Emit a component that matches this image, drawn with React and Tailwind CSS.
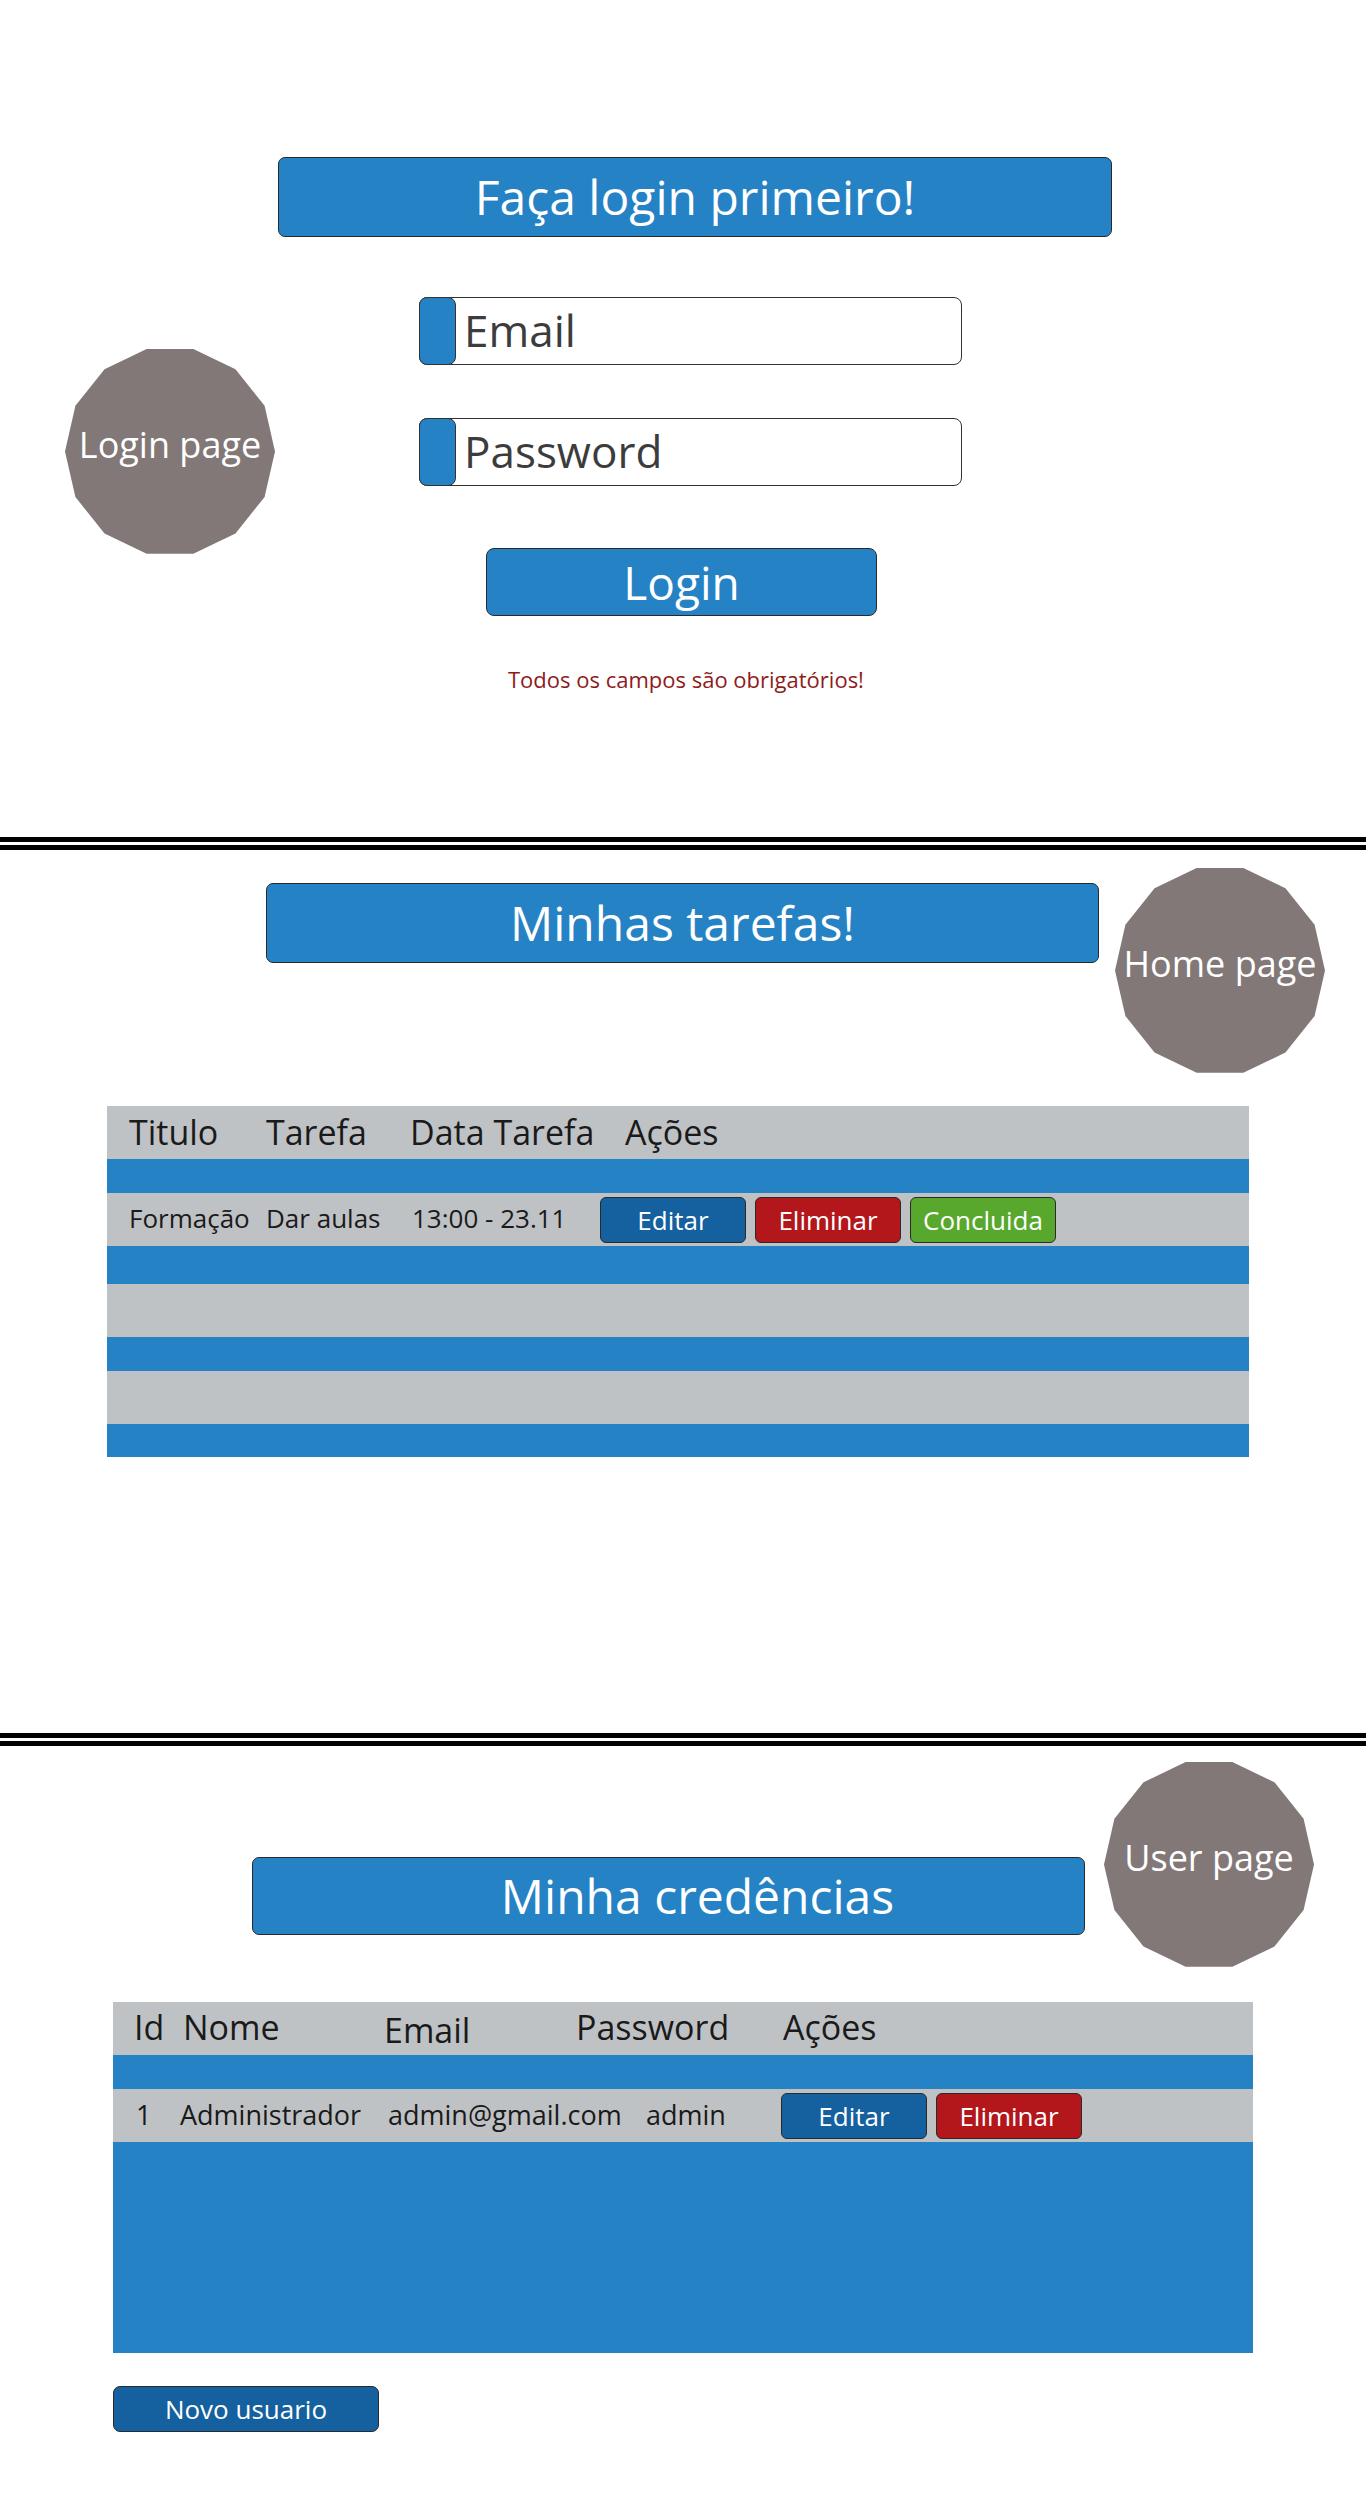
import React from "react";

const pts = Array.from({ length: 14 }, (_, k) => {
  const a = (k * Math.PI * 2) / 14;
  return `${(105 + 105 * Math.cos(a)).toFixed(2)},${(102.4 - 105 * Math.sin(a)).toFixed(2)}`;
}).join(" ");

function Badge({ label, className }) {
  return (
    <div className={`absolute w-[210px] h-[205px] ${className}`}>
      <svg viewBox="0 0 210 205" className="absolute inset-0 w-full h-full">
        <polygon points={pts} fill="#827877" />
      </svg>
      <span className="relative flex h-full items-center justify-center pb-[14px] text-[36px] leading-none text-white">
        {label}
      </span>
    </div>
  );
}

function Title({ children, className }) {
  return (
    <div
      className={`flex items-center justify-center bg-[#2582c5] border border-[#2a2a2a] rounded-[7px] text-white text-[48px] leading-none ${className}`}
    >
      {children}
    </div>
  );
}

function Field({ label, className }) {
  return (
    <div
      className={`ml-[419px] w-[543px] h-[68px] flex items-stretch border border-[#333] rounded-[8px] bg-white ${className}`}
    >
      <div className="-ml-px -my-px w-[37px] bg-[#2582c5] border border-[#333] rounded-[8px]" />
      <div className="flex items-center pl-[8px] pb-[2px] text-[44px] leading-none text-[#3c3c3c]">{label}</div>
    </div>
  );
}

function Btn({ children, color, className }) {
  return (
    <div
      className={`flex items-center justify-center h-[46px] w-[146px] border border-[#2a2a2a] rounded-[6px] text-white text-[26px] leading-none ${color} ${className || ""}`}
    >
      {children}
    </div>
  );
}

function Separator() {
  return (
    <div className="flex flex-col">
      <div className="h-[5px] bg-black" />
      <div className="h-[3px] bg-white" />
      <div className="h-[5px] bg-black" />
    </div>
  );
}

export default function App() {
  return (
    <div className="w-[1366px] h-[2504px] bg-white font-['Open_Sans',sans-serif] overflow-hidden">
      {/* Login section */}
      <section className="relative h-[837px]">
        <Badge className="left-[65px] top-[349px]" label="Login page" />
        <div className="flex flex-col pt-[157px]">
          <Title className="ml-[278px] w-[834px] h-[80px]">Faça login primeiro!</Title>
          <Field label="Email" className="mt-[60px]" />
          <Field label="Password" className="mt-[53px]" />
          <div className="mt-[62px] ml-[486px] w-[391px] h-[68px] flex items-center justify-center bg-[#2582c5] border border-[#2a2a2a] rounded-[8px] text-white text-[46px] leading-none">
            Login
          </div>
          <div className="mt-[49px] ml-[508px] text-[22px] leading-[28px] text-[#8e1b1b]">
            Todos os campos são obrigatórios!
          </div>
        </div>
      </section>

      <Separator />

      {/* Home section */}
      <section className="relative h-[883px]">
        <Badge className="left-[1115px] top-[18px]" label="Home page" />
        <div className="flex flex-col pt-[33px]">
          <Title className="ml-[266px] w-[833px] h-[80px]">Minhas tarefas!</Title>
          <div className="mt-[143px] ml-[107px] w-[1142px] flex flex-col text-[#1a1a1a]">
            <div className="h-[53px] bg-[#bfc2c5] flex items-center pl-[22px] pb-[2px] text-[34px] leading-none">
              <span className="w-[137px]">Titulo</span>
              <span className="w-[144px]">Tarefa</span>
              <span className="w-[215px]">Data Tarefa</span>
              <span>Ações</span>
            </div>
            <div className="h-[34px] bg-[#2582c5]" />
            <div className="h-[53px] bg-[#bfc2c5] flex items-center pl-[22px] text-[26px] leading-none">
              <span className="w-[137px] pb-[4px]">Formação</span>
              <span className="w-[144px] pb-[4px]">Dar aulas</span>
              <span className="w-[190px] pl-[2px] pb-[4px]">13:00 - 23.11</span>
              <div className="flex gap-[9px]">
                <Btn color="bg-[#15609e]">Editar</Btn>
                <Btn color="bg-[#b3161b]">Eliminar</Btn>
                <Btn color="bg-[#58a82d]">Concluida</Btn>
              </div>
            </div>
            <div className="h-[38px] bg-[#2582c5]" />
            <div className="h-[53px] bg-[#bfc2c5]" />
            <div className="h-[34px] bg-[#2582c5]" />
            <div className="h-[53px] bg-[#bfc2c5]" />
            <div className="h-[33px] bg-[#2582c5]" />
          </div>
        </div>
      </section>

      <Separator />

      {/* User section */}
      <section className="relative h-[758px]">
        <Badge className="left-[1104px] top-[16px]" label="User page" />
        <div className="flex flex-col pt-[111px]">
          <Title className="ml-[252px] w-[833px] h-[78px] pl-[58px]">Minha credências</Title>
          <div className="mt-[67px] ml-[113px] w-[1140px] flex flex-col text-[#1a1a1a]">
            <div className="h-[53px] bg-[#bfc2c5] flex items-center pl-[21px] pb-[3px] text-[34px] leading-none">
              <span className="w-[49px]">Id</span>
              <span className="w-[201px]">Nome</span>
              <span className="w-[192px] pt-[6px]">Email</span>
              <span className="w-[207px]">Password</span>
              <span>Ações</span>
            </div>
            <div className="h-[34px] bg-[#2582c5]" />
            <div className="h-[53px] bg-[#bfc2c5] flex items-center pl-[23px] text-[27px] leading-none">
              <span className="w-[44px] pb-[3px]">1</span>
              <span className="w-[208px] pb-[3px]">Administrador</span>
              <span className="w-[258px] pb-[3px]">admin@gmail.com</span>
              <span className="w-[135px] pb-[3px]">admin</span>
              <div className="flex gap-[9px]">
                <Btn color="bg-[#15609e]">Editar</Btn>
                <Btn color="bg-[#b3161b]">Eliminar</Btn>
              </div>
            </div>
            <div className="h-[211px] bg-[#2582c5]" />
          </div>
          <div className="mt-[33px] ml-[113px] w-[266px] h-[46px] flex items-center justify-center bg-[#15609e] border border-[#2a2a2a] rounded-[7px] text-white text-[26px] leading-none">
            Novo usuario
          </div>
        </div>
      </section>
    </div>
  );
}
